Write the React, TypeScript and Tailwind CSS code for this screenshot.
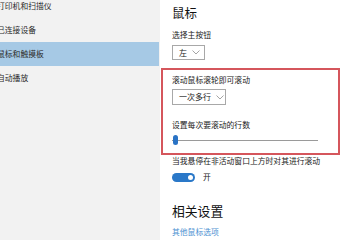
import React from 'react';

const font = { fontFamily: '"Noto Sans CJK SC", "Noto Sans", sans-serif' };

const Chevron: React.FC = () => (
  <svg width="8" height="5" viewBox="0 0 8 5" className="ml-[5px]">
    <polyline points="0.5,0.5 4,4 7.5,0.5" fill="none" stroke="#9a9a9a" strokeWidth="0.9" />
  </svg>
);

const Dropdown: React.FC<{ label: string; className: string }> = ({ label, className }) => (
  <div className={`flex items-center border border-[#a8a8a8] bg-white pl-[6px] text-[8px] leading-[10px] text-[#222] ${className}`}>
    <span>{label}</span>
    <Chevron />
  </div>
);

const sideItems = ['打印机和扫描仪', '已连接设备', '鼠标和触摸板', '自动播放'];

export default function App() {
  return (
    <div className="flex h-[240px] w-[360px] overflow-hidden bg-white" style={font}>
      <div className="w-[160px] shrink-0 overflow-hidden bg-[#f2f2f2]">
        <div className="-mt-[6px]">
          {sideItems.map((item, i) => (
            <div
              key={item}
              className={`flex h-[24px] items-center pl-0 text-[7.8px] text-[#2b2b2b] ${i === 2 ? 'mr-[1px] bg-[#a6c9e5]' : ''}`}
            >
              <span className="-ml-[3px] whitespace-nowrap">{item}</span>
            </div>
          ))}
        </div>
      </div>

      <div className="flex flex-1 flex-col pl-[12px]">
        <div className="mt-[5px] text-[12.5px] leading-[16px] text-[#111]">鼠标</div>
        <div className="mt-[9px] text-[7.8px] leading-[10px] text-[#222]">选择主按钮</div>
        <Dropdown label="左" className="mt-[5px] h-[15px] w-[33px]" />

        <div className="-ml-[11px] mt-[8px] flex h-[87px] w-[179px] flex-col border-2 border-[#d5565c] pl-[9px]">
          <div className="mt-[5px] text-[7.8px] leading-[10px] text-[#222]">滚动鼠标滚轮即可滚动</div>
          <Dropdown label="一次多行" className="mt-[4px] h-[16px] w-[54px]" />
          <div className="mt-[15px] text-[7.8px] leading-[10px] text-[#222]">设置每次要滚动的行数</div>
          <div className="relative mt-[4px] h-[12px] w-[146px]">
            <div className="absolute left-0 right-0 top-[5.5px] h-[1px] bg-[#9a9a9a]" />
            <div className="absolute left-[1px] top-[1px] h-[10px] w-[5px] rounded-full bg-[#2a73c5]" />
          </div>
        </div>

        <div className="mt-[1px] whitespace-nowrap text-[7.8px] leading-[10px] text-[#222]">
          当我悬停在非活动窗口上方时对其进行滚动
        </div>
        <div className="mt-[6px] flex items-center">
          <div className="flex h-[9px] w-[23px] items-center justify-end rounded-full bg-[#2a78c8] pr-[2px]">
            <div className="h-[5px] w-[5px] rounded-full bg-white" />
          </div>
          <span className="ml-[8px] text-[7.8px] leading-[10px] text-[#222]">开</span>
        </div>

        <div className="mt-[21px] text-[12.8px] leading-[16px] text-[#111]">相关设置</div>
        <div className="mt-[8px] text-[7.8px] leading-[10px] text-[#4b8fd1]">其他鼠标选项</div>
      </div>
    </div>
  );
}
